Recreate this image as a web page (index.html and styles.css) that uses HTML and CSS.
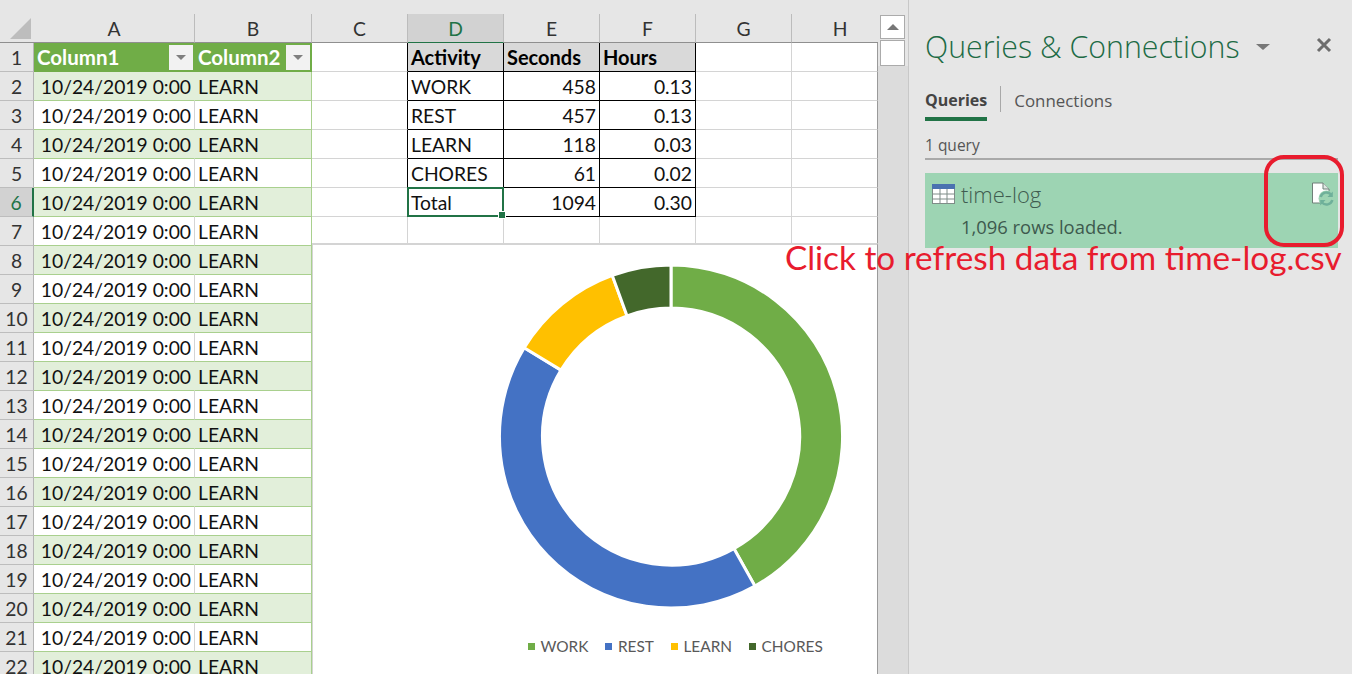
FILE: index.html
```html
<!DOCTYPE html>
<html lang="en">
<head>
<meta charset="utf-8">
<title>Queries &amp; Connections</title>
<link rel="stylesheet" href="styles.css">
</head>
<body>
<div class="app">
  <div class="sheet">
    <table class="grid">
      <colgroup><col class="c-h"><col class="c-a"><col class="c-b"><col class="c-n"><col class="c-n"><col class="c-n"><col class="c-n"><col class="c-n"><col class="c-l"></colgroup>
      <thead>
        <tr><th class="corner"><svg class="corner-mark" width="22" height="22" viewBox="0 0 22 22"><path d="M21 0V21H0Z"/></svg></th><th>A</th><th>B</th><th>C</th><th class="col-on">D</th><th>E</th><th>F</th><th>G</th><th class="col-cut">H</th></tr>
      </thead>
      <tbody>
        <tr><th>1</th><td class="thead">Column1<span class="fb"><i></i></span></td><td class="thead">Column2<span class="fb"><i></i></span></td><td class="bk-r"></td><td class="bk tt">Activity</td><td class="bk tt">Seconds</td><td class="bk tt">Hours</td><td></td><td></td></tr>
        <tr><th>2</th><td class="date band">10/24/2019 0:00</td><td class="txt band">LEARN</td><td class="bk-r"></td><td class="bk">WORK</td><td class="bk num">458</td><td class="bk num">0.13</td><td></td><td></td></tr>
        <tr><th>3</th><td class="date">10/24/2019 0:00</td><td class="txt">LEARN</td><td class="bk-r"></td><td class="bk">REST</td><td class="bk num">457</td><td class="bk num">0.13</td><td></td><td></td></tr>
        <tr><th>4</th><td class="date band">10/24/2019 0:00</td><td class="txt band">LEARN</td><td class="bk-r"></td><td class="bk">LEARN</td><td class="bk num">118</td><td class="bk num">0.03</td><td></td><td></td></tr>
        <tr><th>5</th><td class="date">10/24/2019 0:00</td><td class="txt">LEARN</td><td class="bk-r"></td><td class="bk">CHORES</td><td class="bk num">61</td><td class="bk num">0.02</td><td></td><td></td></tr>
        <tr><th class="row-on">6</th><td class="date band">10/24/2019 0:00</td><td class="txt band">LEARN</td><td class="bk-r"></td><td class="bk sel">Total</td><td class="bk num">1094</td><td class="bk num">0.30</td><td></td><td></td></tr>
        <tr><th>7</th><td class="date">10/24/2019 0:00</td><td class="txt">LEARN</td><td></td><td></td><td></td><td></td><td></td><td></td></tr>
        <tr><th>8</th><td class="date band">10/24/2019 0:00</td><td class="txt band">LEARN</td><td colspan="6"></td></tr>
        <tr><th>9</th><td class="date">10/24/2019 0:00</td><td class="txt">LEARN</td><td colspan="6"></td></tr>
        <tr><th>10</th><td class="date band">10/24/2019 0:00</td><td class="txt band">LEARN</td><td colspan="6"></td></tr>
        <tr><th>11</th><td class="date">10/24/2019 0:00</td><td class="txt">LEARN</td><td colspan="6"></td></tr>
        <tr><th>12</th><td class="date band">10/24/2019 0:00</td><td class="txt band">LEARN</td><td colspan="6"></td></tr>
        <tr><th>13</th><td class="date">10/24/2019 0:00</td><td class="txt">LEARN</td><td colspan="6"></td></tr>
        <tr><th>14</th><td class="date band">10/24/2019 0:00</td><td class="txt band">LEARN</td><td colspan="6"></td></tr>
        <tr><th>15</th><td class="date">10/24/2019 0:00</td><td class="txt">LEARN</td><td colspan="6"></td></tr>
        <tr><th>16</th><td class="date band">10/24/2019 0:00</td><td class="txt band">LEARN</td><td colspan="6"></td></tr>
        <tr><th>17</th><td class="date">10/24/2019 0:00</td><td class="txt">LEARN</td><td colspan="6"></td></tr>
        <tr><th>18</th><td class="date band">10/24/2019 0:00</td><td class="txt band">LEARN</td><td colspan="6"></td></tr>
        <tr><th>19</th><td class="date">10/24/2019 0:00</td><td class="txt">LEARN</td><td colspan="6"></td></tr>
        <tr><th>20</th><td class="date band">10/24/2019 0:00</td><td class="txt band">LEARN</td><td colspan="6"></td></tr>
        <tr><th>21</th><td class="date">10/24/2019 0:00</td><td class="txt">LEARN</td><td colspan="6"></td></tr>
        <tr><th>22</th><td class="date band">10/24/2019 0:00</td><td class="txt band">LEARN</td><td colspan="6"></td></tr>
      </tbody>
    </table>
    <div class="chart">
      <svg class="donut" width="346" height="346" viewBox="-173 -173.5 346 346">
        <g stroke="#fff" stroke-width="3">
          <path fill="#70ad47" d="M0 -171.5A171.5 171.5 0 0 1 83.9 149.6L62.9 112.1A128.5 128.5 0 0 0 0 -128.5Z"/>
          <path fill="#4472c4" d="M83.9 149.6A171.5 171.5 0 0 1 -146.8 -88.7L-110 -66.4A128.5 128.5 0 0 0 62.9 112.1Z"/>
          <path fill="#ffc000" d="M-146.8 -88.7A171.5 171.5 0 0 1 -58.7 -161.1L-44 -120.7A128.5 128.5 0 0 0 -110 -66.4Z"/>
          <path fill="#43682b" d="M-58.7 -161.1A171.5 171.5 0 0 1 0 -171.5L0 -128.5A128.5 128.5 0 0 0 -44 -120.7Z"/>
        </g>
      </svg>
      <div class="legend">
        <span class="lg"><i class="k k-work"></i>WORK</span>
        <span class="lg"><i class="k k-rest"></i>REST</span>
        <span class="lg"><i class="k k-learn"></i>LEARN</span>
        <span class="lg"><i class="k k-chores"></i>CHORES</span>
      </div>
    </div>
  </div>
  <div class="scroll">
    <div class="sb-btn"><i></i></div>
    <div class="sb-thumb"></div>
  </div>
  <aside class="panel">
    <header class="p-head">
      <h1>Queries &amp; Connections</h1>
      <span class="caret"></span>
      <svg class="close" width="16" height="16" viewBox="0 0 16 16"><path d="M2 2L14 14M14 2L2 14"/></svg>
    </header>
    <nav class="tabs">
      <span class="tab on">Queries</span>
      <span class="tab-sep"></span>
      <span class="tab">Connections</span>
    </nav>
    <div class="count">1 query</div>
    <div class="item">
      <div class="item-top">
        <svg class="tbl" width="23" height="20" viewBox="0 0 23 20">
          <rect x="0.5" y="0.5" width="22" height="19" fill="#fff" stroke="#7f8c88"/>
          <rect x="0" y="0" width="23" height="5" fill="#4a72b0"/>
          <path d="M0 10H23M0 15H23M8 5V20M15 5V20" stroke="#7f8c88" fill="none"/>
        </svg>
        <span class="item-name">time-log</span>
        <svg class="refresh" width="24" height="24" viewBox="0 0 24 24">
          <path d="M1.5 1H12L18 7V21H1.5Z" fill="#fff" stroke="#6f7f78"/>
          <path d="M12 1V7H18" fill="#dfe8e3" stroke="#6f7f78"/>
          <circle cx="15.5" cy="16.5" r="8" fill="#9dd4b3"/>
          <path d="M9.7 15A6 6 0 0 1 20 12.5M21.3 18A6 6 0 0 1 11 20.5" fill="none" stroke="#6fb09a" stroke-width="2.5"/>
          <path d="M21.8 9.5V15H16.5ZM9.2 23.5V18H14.5Z" fill="#6fb09a"/>
        </svg>
      </div>
      <div class="item-sub">1,096 rows loaded.</div>
    </div>
  </aside>
  <div class="callout-box"></div>
  <div class="callout-text">Click to refresh data from time-log.csv</div>
</div>
</body>
</html>
```
FILE: styles.css
```css
* { box-sizing: border-box; }
html, body { margin: 0; height: 674px; overflow: hidden; background: #e6e6e6; }
body { font-family: Lato, "Liberation Sans", sans-serif; }
.app { position: relative; display: flex; width: 1352px; height: 674px; overflow: hidden; }

/* Sheet */
.sheet { position: relative; flex: none; width: 878px; height: 674px; padding-top: 14px; overflow: hidden; }
.grid { table-layout: fixed; border-collapse: separate; border-spacing: 0; width: 878px; font-size: 19.3px; color: #111; }
.c-h { width: 34px; } .c-a { width: 161px; } .c-b { width: 117px; } .c-n { width: 96px; } .c-l { width: 86px; }
.grid tr { height: 29px; }
.grid thead tr { height: 29px; }
.grid th { padding: 0; font-weight: 400; color: #333; background: #e6e6e6; border-right: 1px solid #bdbdbd; border-bottom: 1px solid #bdbdbd; text-align: center; }
.grid thead th { border-bottom: 1px solid #8f8f8f; border-right-color: #bcbcbc; }
.grid thead .corner { position: relative; border-right: 0; }
.grid thead .col-cut { padding-left: 10px; border-right: 0; }
.corner-mark { position: absolute; left: 10px; top: 4px; fill: #bdbdbd; }
.grid tbody th { border-right: 1px solid #b5b5b5; }
.grid td { padding: 0 0 0 4px; height: 29px; background: #fff; border-right: 1px solid #d4d4d4; border-bottom: 1px solid #d4d4d4; white-space: nowrap; overflow: hidden; }
.grid td:last-child { border-right-color: #9a9a9a; }
.grid thead .col-on { background: #d2d2d2; color: #217346; border-bottom: 1px solid #217346; }
.grid tbody .row-on { background: #d2d2d2; color: #217346; border-right: 2px solid #217346; }
.grid td.date { text-align: right; padding: 0 3px 0 0; border-right-color: #d4d4d4; border-bottom-color: #a9d08e; }
.grid td.txt { padding-left: 3px; border-right: 1px solid #a9d08e; border-bottom-color: #a9d08e; }
.grid td.band { background: #e2efda; border-right-color: #e2efda; }
.grid td.txt.band { border-right-color: #a9d08e; }
.grid td.thead { position: relative; padding-left: 3px; background: #70ad47; color: #fff; font-weight: 700; font-size: 20.5px; border-right-color: #70ad47; border-bottom-color: #70ad47; overflow: visible; }
.fb { position: absolute; right: 1px; top: 2px; width: 24px; height: 25px; background: #f2f2f2; display: flex; align-items: center; justify-content: center; }
.fb i { width: 0; height: 0; border-left: 5px solid transparent; border-right: 5px solid transparent; border-top: 5px solid #7f7f7f; }
.grid td.bk-r { border-right-color: #000; }
.grid td.bk { padding-left: 3px; border-right-color: #000; border-bottom-color: #000; }
.grid td.tt { background: #d9d9d9; font-weight: 700; font-size: 20px; color: #000; }
.grid td.num { text-align: right; padding: 0 3px 0 0; }
.grid td.sel { position: relative; overflow: visible; }
.grid td.sel::before { content: ""; position: absolute; left: -1px; top: -1px; right: -1px; bottom: -1px; border: 2px solid #217346; }
.grid td.sel::after { content: ""; position: absolute; right: -3px; bottom: -3px; width: 6px; height: 6px; background: #217346; border: 1px solid #fff; }

/* Chart */
.chart { position: absolute; left: 312px; top: 243px; right: 0; bottom: 0; background: #fff; border-top: 2px solid #d4d4d4; border-left: 1px solid #d4d4d4; border-right: 1px solid #9a9a9a; display: flex; flex-direction: column; align-items: flex-start; }
.donut { flex: none; margin-top: 18px; margin-left: 185px; }
.legend { display: flex; gap: 17px; margin-top: 28px; margin-left: 215px; font-size: 15.4px; color: #595959; }
.lg { display: flex; align-items: center; gap: 5.5px; }
.k { width: 7px; height: 7px; }
.k-work { background: #70ad47; } .k-rest { background: #4472c4; } .k-learn { background: #ffc000; } .k-chores { background: #43682b; }

/* Scrollbar */
.scroll { flex: none; width: 31px; height: 674px; padding: 15px 3px 0 2px; border-right: 1px solid #c8c8c8; display: flex; flex-direction: column; gap: 1px; background: linear-gradient(#e6e6e6 0 66px, #dcdcdc 66px); }
.sb-btn { height: 24px; background: #fff; border: 1px solid #ababab; display: flex; align-items: center; justify-content: center; }
.sb-btn i { width: 0; height: 0; border-left: 6px solid transparent; border-right: 6px solid transparent; border-bottom: 6px solid #777; }
.sb-thumb { height: 26px; background: #fff; border: 1px solid #ababab; }

/* Panel */
.panel { flex: none; width: 443px; height: 674px; padding: 0 14px 0 16px; background: #e6e6e6; font-family: "Open Sans", "Liberation Sans", sans-serif; color: #444; }
.p-head { position: relative; height: 80px; padding-top: 25px; display: flex; align-items: flex-start; }
.p-head h1 { margin: 0; font-size: 30.3px; line-height: 44px; font-weight: 300; color: #1d6b45; white-space: nowrap; }
.caret { margin: 19px 0 0 16px; width: 0; height: 0; border-left: 7px solid transparent; border-right: 7px solid transparent; border-top: 6px solid #777; }
.close { position: absolute; right: 6px; top: 37px; fill: none; stroke: #6d6d6d; stroke-width: 3; }
.tabs { height: 41px; display: flex; align-items: flex-start; padding-top: 6px; font-size: 16px; }
.tab { line-height: 29px; color: #555; font-size: 16.9px; }
.tab.on { font-size: 16px; font-weight: 700; height: 35px; border-bottom: 4px solid #217346; color: #444; }
.tab-sep { width: 1px; height: 26px; margin: 0 13px; background: #a8a8a8; }
.count { height: 39px; padding-top: 12px; border-bottom: 2px solid #a9a9a9; font-size: 15.5px; line-height: 24px; color: #555; }
.item { margin-top: 13px; width: 413px; height: 75px; padding: 6px 3px 0 7px; background: #9dd4b3; }
.item-top { display: flex; align-items: center; height: 30px; }
.tbl { flex: none; }
.item-name { margin-left: 6px; font-size: 22px; font-weight: 300; color: #3f5c50; line-height: 30px; }
.refresh { flex: none; margin-left: auto; }
.item-sub { margin: 6px 0 0 29px; font-size: 18.4px; line-height: 24px; color: #3d5a4e; }

/* Annotation over the page */
.callout-box { position: absolute; left: 1264px; top: 155px; width: 80px; height: 92px; border: 4px solid #e81c2e; border-radius: 20px; }
.callout-text { position: absolute; left: 785px; top: 237px; font-size: 33.3px; line-height: 40px; color: #e81c2e; white-space: nowrap; }
```
